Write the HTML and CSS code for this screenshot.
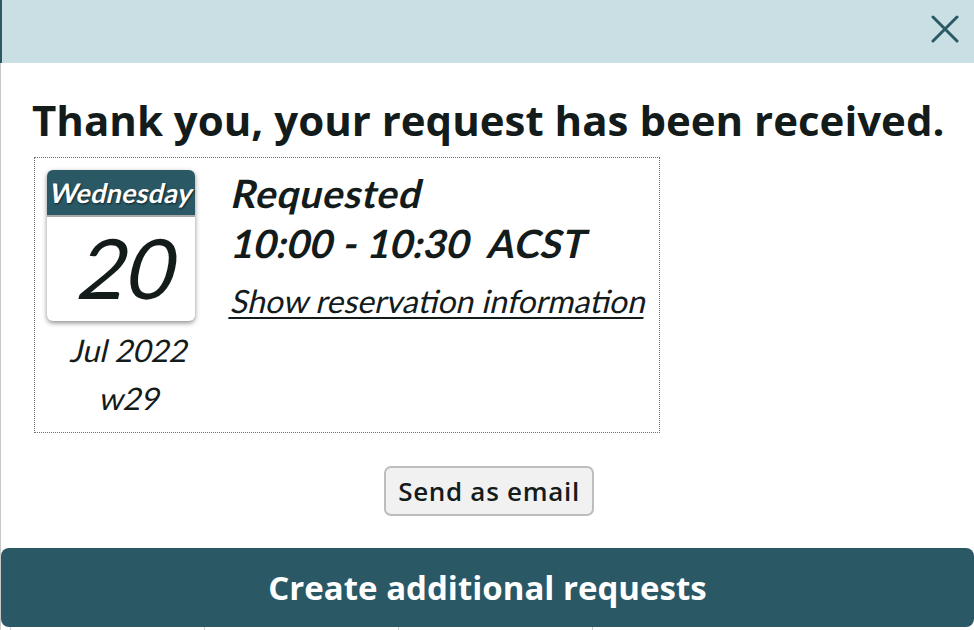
FILE: index.html
```html
<!DOCTYPE html>
<html>
<head>
<meta charset="utf-8">
<link rel="stylesheet" href="styles.css">
</head>
<body>
<div class="modal">
  <div class="modal-header">
    <button class="close" aria-label="Close">
      <svg width="28" height="28" viewBox="0 0 28 28"><path d="M2 2 L26 26 M26 2 L2 26" stroke="#2a5965" stroke-width="3" stroke-linecap="round" fill="none"/></svg>
    </button>
  </div>
  <div class="modal-body">
    <h1 class="title">Thank you, your request has been received.</h1>
    <div class="booking">
      <div class="date-col">
        <div class="cal">
          <div class="cal-day"><span class="obl">Wednesday</span></div>
          <div class="cal-num"><span class="obl">20</span></div>
        </div>
        <div class="cal-month"><span class="obl">Jul 2022</span></div>
        <div class="cal-week"><span class="obl">w29</span></div>
      </div>
      <div class="info-col">
        <div class="status"><span class="obl">Requested</span></div>
        <div class="time"><span class="obl">10:00 - 10:30&nbsp; ACST</span></div>
        <div class="show-row"><a class="show-link obl" href="#">Show reservation information</a></div>
      </div>
    </div>
    <div class="email-row">
      <button class="email-btn">Send as email</button>
    </div>
    <button class="create-btn">Create additional requests</button>
  </div>
  <div class="under-strip">
    <span></span><span></span><span></span><span></span><span></span>
  </div>
</div>
</body>
</html>
```

FILE: styles.css
```css
* { box-sizing: border-box; }
html, body { margin: 0; padding: 0; background: #ffffff; }
body { width: 974px; height: 630px; overflow: hidden; font-family: "Open Sans", "Liberation Sans", sans-serif; color: #141b1b; }

.modal { width: 974px; height: 630px; display: flex; flex-direction: column; }

.modal-header {
  flex: 0 0 63px;
  height: 63px;
  background: #c9dfe3;
  border-left: 2px solid #2a5965;
  display: flex;
  justify-content: flex-end;
  align-items: flex-start;
  padding: 15px 15px 0 0;
}
.close { background: none; border: 0; padding: 0; width: 28px; height: 28px; cursor: pointer; }
.close svg { display: block; }

.modal-body {
  flex: 1;
  border-left: 1px solid #c8c8c8;
  display: flex;
  flex-direction: column;
}

.obl {
  display: inline-block;
  transform: skewX(-13deg);
  transform-origin: 0 75%;
}

.title {
  margin: 31px 0 0 31px;
  font-family: "Open Sans", sans-serif;
  font-weight: 700;
  font-size: 42px;
  line-height: 52px;
  letter-spacing: 0px;
  color: #141b1b;
  white-space: nowrap;
}

.booking {
  flex: 0 0 auto;
  margin: 11px 0 0 33px;
  width: 626px;
  height: 276px;
  border: 1px dotted #707070;
  padding: 12px 12px 0 12px;
  display: flex;
  gap: 35px;
}

.date-col { width: 148px; display: flex; flex-direction: column; align-items: center; }
.cal {
  width: 148px;
  border-radius: 6px;
  background: #fff;
  box-shadow: 0 2px 5px rgba(0,0,0,0.45);
}
.cal-day {
  height: 47px;
  background: #2a5965;
  border-radius: 6px 6px 0 0;
  border-bottom: 2px solid #a9a9a9;
  color: #fff;
  font-family: Lato, sans-serif;
  font-weight: 700;
  font-size: 27px;
  letter-spacing: 0.2px;
  line-height: 45px;
  text-align: center;
  white-space: nowrap;
  text-shadow: 1px 1px 2px rgba(0,0,0,0.7);
}
.cal-day .obl { margin-left: -4px; }
.cal-num {
  height: 104px;
  font-family: Lato, sans-serif;
  font-size: 83px;
  line-height: 100px;
  text-align: center;
  color: #141b1b;
}
.cal-num .obl { margin-left: 6px; }
.cal-month, .cal-week {
  font-family: Lato, sans-serif;
  font-size: 31px;
  line-height: 48px;
  padding-left: 14px;
  white-space: nowrap;
}
.cal-month { margin-top: 5px; }

.info-col { display: flex; flex-direction: column; }
.status, .time {
  font-family: Lato, sans-serif;
  font-weight: 700;
  font-size: 39px;
  line-height: 50px;
  letter-spacing: 0.3px;
  white-space: nowrap;
}
.status { margin-top: -2px; }
.status .obl { letter-spacing: 0.7px; }
.show-row { margin-top: 13px; line-height: 40px; }
.show-link {
  font-family: Lato, sans-serif;
  font-size: 32px;
  line-height: 40px;
  color: #141b1b;
  white-space: nowrap;
  text-decoration: underline;
  text-decoration-thickness: 2px;
  text-underline-offset: 4px;
}

.email-row { display: flex; justify-content: center; margin-top: 33px; }
.email-btn {
  width: 210px;
  height: 50px;
  margin-left: 3px;
  background: #f1f1f1;
  border: 2px solid #bdbdbd;
  border-radius: 7px;
  font-family: "Open Sans", sans-serif;
  font-weight: 600;
  font-size: 26px;
  letter-spacing: 0.7px;
  color: #141b1b;
  padding: 0;
}

.create-btn {
  margin-top: 32px;
  width: 973px;
  height: 79px;
  background: #2a5965;
  border: 0;
  border-radius: 8px;
  color: #fff;
  font-family: "Open Sans", sans-serif;
  font-weight: 700;
  font-size: 33px;
  padding: 0;
}

.under-strip { height: 3px; display: flex; }
.under-strip span { flex: 0 0 194px; border-left: 1px solid #cfcfcf; }
.under-strip span:first-child { flex-basis: 10px; }
```
